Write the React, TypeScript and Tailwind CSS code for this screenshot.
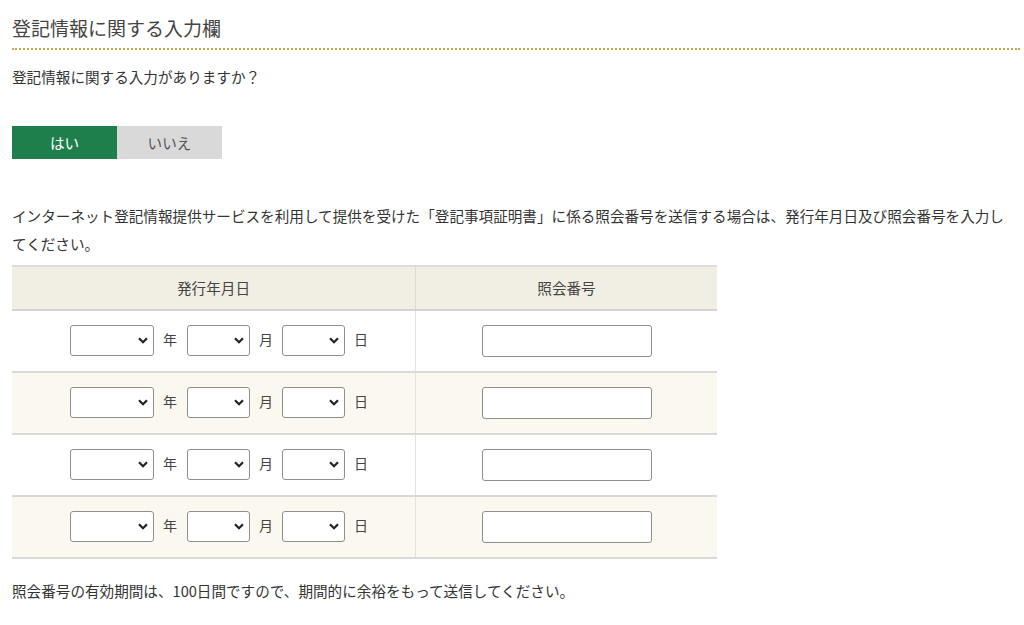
import React from 'react';

const font = { fontFamily: '"Noto Sans CJK JP", "Noto Sans", sans-serif' };

function DateSelect({ width }: { width: string }) {
  return (
    <div className={`relative ${width} h-[31px]`}>
      <select className="appearance-none w-full h-full border border-[#8f8f8f] rounded-[3px] bg-white" />
      <svg className="absolute right-[6px] top-[12px] w-[10px] h-[7px] pointer-events-none" viewBox="0 0 10 7">
        <path d="M1 1.2 L5 5.2 L9 1.2" fill="none" stroke="#222" strokeWidth="2.2" />
      </svg>
    </div>
  );
}

function Row({ shaded }: { shaded: boolean }) {
  return (
    <div className={`grid grid-cols-[404px_1fr] h-[62px] border-b-2 border-[#d9d9d9] ${shaded ? 'bg-[#fbf8f0]' : 'bg-white'}`}>
      <div className="flex items-center pl-[58px] pb-[2px] border-r border-[#e2e2e2] text-[14px] text-[#444]">
        <DateSelect width="w-[84px]" />
        <span className="ml-[9px] mr-[10px] leading-none pb-[2px]">年</span>
        <DateSelect width="w-[63px]" />
        <span className="ml-[9px] mr-[9px] leading-none pb-[2px]">月</span>
        <DateSelect width="w-[63px]" />
        <span className="ml-[9px] leading-none pb-[2px]">日</span>
      </div>
      <div className="flex items-center justify-center">
        <input type="text" className="w-[170px] h-[32px] border border-[#8f8f8f] rounded-[3px] bg-white" />
      </div>
    </div>
  );
}

export default function App() {
  return (
    <div className="bg-white w-[1024px] h-[625px] px-[12px] pt-[14px] text-[#333]" style={font}>
      <h2 className="text-[19px] leading-[28px] text-[#444] pb-[6px] border-b-2 border-dotted border-[#c9a84a] mr-[-8px]">
        登記情報に関する入力欄
      </h2>
      <p className="text-[14.6px] leading-[24px] mt-[15px]">登記情報に関する入力がありますか？</p>
      <div className="flex mt-[37px]">
        <button className="w-[105px] h-[33px] bg-[#1e7f4c] text-white text-[14.6px]">はい</button>
        <button className="w-[105px] h-[33px] bg-[#d9d9d9] text-[#555] text-[14.6px]">いいえ</button>
      </div>
      <p className="text-[14.6px] leading-[28px] mt-[43px]">
        インターネット登記情報提供サービスを利用して提供を受けた「登記事項証明書」に係る照会番号を送信する場合は、発行年月日及び照会番号を入力してください。
      </p>
      <div className="w-[705px] mt-[7px] border-t-2 border-[#dcdcdc]">
        <div className="grid grid-cols-[404px_1fr] h-[44px] bg-[#f1eee4] border-b-2 border-[#d3d3d3] text-[14.6px] text-[#444]">
          <div className="flex items-center justify-center border-r border-[#dedbd2]">発行年月日</div>
          <div className="flex items-center justify-center">照会番号</div>
        </div>
        <Row shaded={false} />
        <Row shaded={true} />
        <Row shaded={false} />
        <Row shaded={true} />
      </div>
      <p className="text-[14.6px] leading-[24px] mt-[20px]">照会番号の有効期間は、100日間ですので、期間的に余裕をもって送信してください。</p>
    </div>
  );
}
